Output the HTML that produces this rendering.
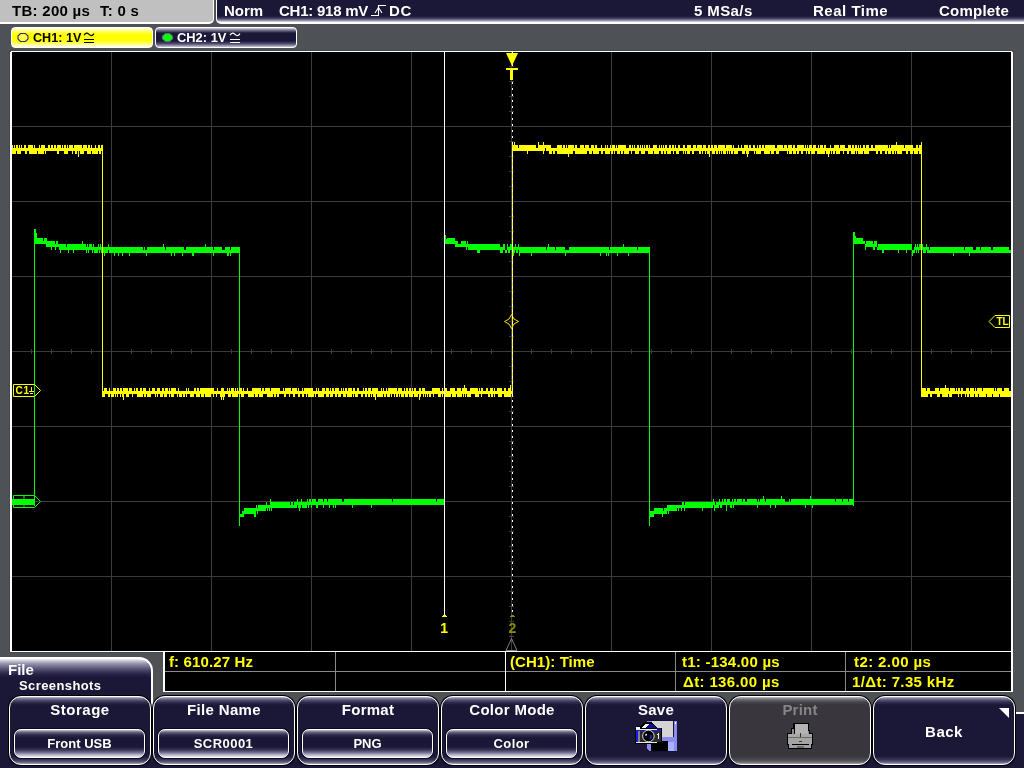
<!DOCTYPE html>
<html lang="en">
<head>
<meta charset="utf-8">
<title>Oscilloscope screenshot</title>
<style>
html,body{margin:0;padding:0}
body{width:1024px;height:768px;overflow:hidden;background:#4e5156;position:relative;
font-family:"Liberation Sans",Arial,sans-serif;font-weight:bold;font-size:15px;line-height:1;color:#fff}
div,span{box-sizing:border-box}
.abs{position:absolute}
.st{font-family:"Liberation Sans",Arial,sans-serif;font-weight:bold}
.t{position:absolute;white-space:pre;line-height:15px;height:15px;will-change:transform}
#tbl{position:absolute;left:0;top:0;width:214px;height:24px;background:#c0c0c0;border-right:1px solid #fff;border-bottom:2px solid #fff;border-bottom-right-radius:5px;color:#000}
#tbr{position:absolute;left:216px;top:0;width:808px;height:24px;border-left:1px solid #fff;border-bottom:2px solid #fff;border-bottom-left-radius:5px;
background:linear-gradient(to bottom,#1b1736 0,#1b1736 16px,#37335a 18px,#7e7b98 20px,#c8c7d4 21.5px,#e8e8ee 22px)}
.tab{position:absolute;top:27px;height:21px;border:1px solid #fff;border-radius:4px;font-size:12.5px}
#tab1{left:11px;width:142px;color:#000;background:linear-gradient(to bottom,#ffffe8 0,#ffffa0 2px,#ffff48 4px,#ffff00 7px,#ffff00 12px,#ffff50 15px,#ffffa8 17px,#fffff0 19px)}
#tab2{left:155px;width:142px;color:#fff;background:linear-gradient(to bottom,#d8d7e2 0,#7d7a98 2px,#1b1736 5px,#1b1736 13px,#55527a 16px,#c9c8d6 19px)}
#scope{position:absolute;left:0;top:0;width:1024px;height:768px;will-change:transform}
#meas{position:absolute;left:163px;top:651px;width:850px;height:41px;background:#000;border:1px solid #fff;border-left-width:2px;border-right-width:2px;color:#ffff00}
#filetab{position:absolute;left:-2px;top:657px;width:155px;height:70px;border:1px solid #fff;border-top-width:2px;border-right-width:2px;border-bottom:0;border-top-right-radius:14px;
background:linear-gradient(to bottom,#f4f4f8 0,#c4c3d2 2px,#918fa8 5px,#605d7e 9px,#37335a 13px,#231f42 16px,#1b1736 19px)}
#bar{position:absolute;left:0;top:712px;width:1024px;height:56px;background:#1b1736;border-top:2px solid #fff}
.btn{position:absolute;top:696px;width:142px;height:69px;border:1px solid #fff;border-radius:12px;text-align:center;box-shadow:0 0 0 1px #000;
background:linear-gradient(to bottom,#bdbccc 0,#6d6a8a 2px,#34304f 5px,#1b1736 8px,#1b1736 59px,#3b3758 63px,#7a7794 66px,#b5b4c6 67px)}
.btn.dis{color:#858585;background:linear-gradient(to bottom,#c0c0c4 0,#77767c 2px,#47454b 5px,#39373d 8px,#39373d 59px,#4d4b52 63px,#7c7b82 66px,#b0b0b6 67px)}
.bl{position:absolute;left:0;right:0;top:5px;height:15px;line-height:15px;font-size:15px;letter-spacing:0;will-change:transform}
.val{position:absolute;left:4px;right:5px;top:32px;height:29px;border:1px solid #fff;border-radius:7px;font-size:13px;letter-spacing:0;box-shadow:0 0 0 1px #0a0820;
background:linear-gradient(to bottom,#c9c8d6 0,#6d6a8a 2px,#2c2848 5px,#1b1736 8px,#1b1736 17px,#3b3758 20px,#7d7a98 23px,#bcbbcc 25px,#e6e6ee 27px)}
.val span{position:absolute;left:0;right:0;top:6px;line-height:15px;will-change:transform}
</style>
</head>
<body>
<!-- top status bar -->
<div id="tbl"></div>
<div id="tbr"></div>
<span class="t" id="x-tb" style="left:11.84px;top:3px;color:#000;letter-spacing:0.28px">TB: 200 µs</span>
<span class="t" id="x-tt" style="left:99.84px;top:3px;color:#000;letter-spacing:0.28px">T: 0 s</span>
<span class="t" id="x-norm" style="left:223.84px;top:3px;color:#fff;letter-spacing:0px">Norm</span>
<span class="t" id="x-ch1" style="left:278.84px;top:3px;color:#fff;letter-spacing:-0.238px">CH1: 918 mV</span>
<span class="t" id="x-dc" style="left:388.84px;top:3px;color:#fff;letter-spacing:0.7px">DC</span>
<span class="t" id="x-msa" style="left:693.52px;top:3px;color:#fff;letter-spacing:0.397px">5 MSa/s</span>
<span class="t" id="x-real" style="left:813px;top:3px;color:#fff;letter-spacing:0.508px">Real Time</span>
<span class="t" id="x-comp" style="left:938.52px;top:3px;color:#fff;letter-spacing:0.22px">Complete</span>
<svg class="abs" style="left:370px;top:0" width="20" height="20" viewBox="0 0 20 20"><path d="M1 15.5H8.500V5.500H16" fill="none" stroke="#fff" stroke-width="1.100"/><path d="M5 13L8.500 7.500L12 13" fill="none" stroke="#fff" stroke-width="1.100"/></svg>

<!-- channel tabs -->
<div class="tab" id="tab1"></div>
<div class="tab" id="tab2"></div>
<svg class="abs" style="left:17px;top:32px" width="12" height="11" viewBox="0 0 12 11"><path d="M3.5 1.5h5l2.5 2.5v3l-2.5 2.5h-5l-2.5-2.5v-3z" fill="#ffff50" stroke="#34325a" stroke-width="1.15"/></svg>
<span class="t" style="left:33px;top:31px;font-size:12.6px;color:#000">CH1: 1V</span>
<svg class="abs" style="left:83px;top:32px" width="12" height="12" viewBox="0 0 12 12"><path d="M1 3.2C3 0.2 4.6 1 6 2.4S9 4.6 11 1.6" fill="none" stroke="#000" stroke-width="1.1"/><path d="M1 7.5h10M1 10.5h10" stroke="#000" stroke-width="1.1"/></svg>
<svg class="abs" style="left:161px;top:32px" width="13" height="11" viewBox="0 0 13 11"><path d="M4.300 1.800h4.400l2.600 2.400v2.600l-2.600 2.400h-4.400l-2.600-2.400v-2.600z" fill="#00ff00" stroke="#5e9070" stroke-width="1.100" stroke-linejoin="round"/></svg>
<span class="t" style="left:177px;top:30.4px;font-size:12.9px">CH2: 1V</span>
<svg class="abs" style="left:229px;top:32px" width="12" height="12" viewBox="0 0 12 12"><path d="M1 3.2C3 0.2 4.6 1 6 2.4S9 4.6 11 1.6" fill="none" stroke="#fff" stroke-width="1.2"/><path d="M1 7.5h10M1 10.5h10" stroke="#fff" stroke-width="1.2"/></svg>

<!-- scope display -->
<svg id="scope" width="1024" height="768" viewBox="0 0 1024 768" shape-rendering="crispEdges">
<rect x="9" y="50" width="1005" height="603" fill="#44474c"/>
<rect x="10" y="51" width="1003" height="601" fill="#fff"/>
<rect x="10" y="51" width="1" height="1" fill="#4e5156"/><rect x="1012" y="51" width="1" height="1" fill="#4e5156"/>
<rect x="12" y="52" width="999" height="599" fill="#000"/>
<path d="M111 52h1v599h-1zM211 52h1v599h-1zM311 52h1v599h-1zM411 52h1v599h-1zM511 52h1v599h-1zM611 52h1v599h-1zM711 52h1v599h-1zM811 52h1v599h-1zM911 52h1v599h-1zM12 126h999v1h-999zM12 201h999v1h-999zM12 276h999v1h-999zM12 351h999v1h-999zM12 426h999v1h-999zM12 501h999v1h-999zM12 576h999v1h-999zM31 349h1v5h-1zM51 349h1v5h-1zM71 349h1v5h-1zM91 349h1v5h-1zM131 349h1v5h-1zM151 349h1v5h-1zM171 349h1v5h-1zM191 349h1v5h-1zM231 349h1v5h-1zM251 349h1v5h-1zM271 349h1v5h-1zM291 349h1v5h-1zM331 349h1v5h-1zM351 349h1v5h-1zM371 349h1v5h-1zM391 349h1v5h-1zM431 349h1v5h-1zM451 349h1v5h-1zM471 349h1v5h-1zM491 349h1v5h-1zM531 349h1v5h-1zM551 349h1v5h-1zM571 349h1v5h-1zM591 349h1v5h-1zM631 349h1v5h-1zM651 349h1v5h-1zM671 349h1v5h-1zM691 349h1v5h-1zM731 349h1v5h-1zM751 349h1v5h-1zM771 349h1v5h-1zM791 349h1v5h-1zM831 349h1v5h-1zM851 349h1v5h-1zM871 349h1v5h-1zM891 349h1v5h-1zM931 349h1v5h-1zM951 349h1v5h-1zM971 349h1v5h-1zM991 349h1v5h-1zM509 66h5v1h-5zM509 81h5v1h-5zM509 96h5v1h-5zM509 111h5v1h-5zM509 141h5v1h-5zM509 156h5v1h-5zM509 171h5v1h-5zM509 186h5v1h-5zM509 216h5v1h-5zM509 231h5v1h-5zM509 246h5v1h-5zM509 261h5v1h-5zM509 291h5v1h-5zM509 306h5v1h-5zM509 321h5v1h-5zM509 336h5v1h-5zM509 366h5v1h-5zM509 381h5v1h-5zM509 396h5v1h-5zM509 411h5v1h-5zM509 441h5v1h-5zM509 456h5v1h-5zM509 471h5v1h-5zM509 486h5v1h-5zM509 516h5v1h-5zM509 531h5v1h-5zM509 546h5v1h-5zM509 561h5v1h-5zM509 591h5v1h-5zM509 606h5v1h-5zM509 621h5v1h-5zM509 636h5v1h-5z" fill="#3c3c3c"/>
<path d="M41 501h970v1h-970z" fill="#3c3c3c"/>
<!-- traces -->
<path d="M12 499h22v6h-22zM34 229h1v277h-1zM35 229h1v15h-1zM36 233h1v11h-1zM37 238h6v6h-6zM43 241h1v3h-1zM44 238h2v6h-2zM46 238h1v9h-1zM47 241h4v6h-4zM51 241h1v9h-1zM52 241h3v6h-3zM55 244h1v6h-1zM56 241h2v6h-2zM58 244h1v3h-1zM59 244h1v6h-1zM60 244h1v9h-1zM61 244h5v6h-5zM66 247h1v3h-1zM67 244h1v6h-1zM68 244h1v9h-1zM69 244h4v6h-4zM73 244h1v9h-1zM74 244h8v6h-8zM82 241h1v9h-1zM83 244h3v6h-3zM86 247h1v6h-1zM87 244h1v6h-1zM88 247h1v6h-1zM89 244h3v6h-3zM92 247h1v6h-1zM93 244h1v6h-1zM94 247h4v6h-4zM98 244h1v6h-1zM99 247h1v6h-1zM100 244h1v6h-1zM101 247h3v6h-3zM104 247h1v9h-1zM105 247h3v6h-3zM108 244h1v6h-1zM109 247h5v6h-5zM114 247h1v9h-1zM115 247h3v6h-3zM118 247h1v9h-1zM119 247h3v6h-3zM122 247h1v9h-1zM123 247h6v6h-6zM129 247h1v9h-1zM130 247h13v6h-13zM143 250h1v3h-1zM144 247h1v6h-1zM145 250h1v3h-1zM146 250h1v6h-1zM147 247h16v6h-16zM163 244h1v9h-1zM164 247h1v6h-1zM165 250h1v3h-1zM166 247h5v6h-5zM171 247h1v9h-1zM172 247h2v6h-2zM174 247h1v9h-1zM175 247h7v6h-7zM182 247h1v9h-1zM183 247h1v6h-1zM184 250h2v3h-2zM186 247h6v6h-6zM192 247h2v9h-2zM194 247h11v6h-11zM205 244h1v9h-1zM206 247h7v6h-7zM213 250h1v6h-1zM214 247h8v6h-8zM222 250h3v3h-3zM225 247h2v6h-2zM227 247h2v9h-2zM229 247h1v6h-1zM230 250h1v6h-1zM231 247h8v6h-8zM239 247h1v279h-1zM240 514h2v3h-2zM242 511h2v6h-2zM244 508h10v6h-10zM254 508h2v9h-2zM256 505h1v6h-1zM257 508h1v6h-1zM258 505h8v6h-8zM266 502h1v6h-1zM267 505h1v6h-1zM268 505h1v3h-1zM269 505h1v6h-1zM270 499h1v9h-1zM271 502h1v9h-1zM272 502h18v6h-18zM290 505h1v3h-1zM291 502h2v6h-2zM293 505h1v3h-1zM294 502h3v6h-3zM297 499h1v6h-1zM298 502h1v6h-1zM299 502h1v9h-1zM300 502h1v6h-1zM301 499h1v6h-1zM302 502h5v6h-5zM307 499h1v6h-1zM308 502h1v6h-1zM309 499h2v6h-2zM311 502h1v6h-1zM312 499h4v6h-4zM316 502h2v6h-2zM318 499h5v6h-5zM323 502h1v6h-1zM324 499h3v6h-3zM327 502h1v3h-1zM328 499h1v6h-1zM329 499h1v9h-1zM330 499h3v6h-3zM333 499h1v9h-1zM334 499h1v6h-1zM335 499h1v9h-1zM336 499h6v6h-6zM342 502h2v3h-2zM344 499h8v6h-8zM352 499h1v9h-1zM353 499h18v6h-18zM371 499h1v9h-1zM372 499h20v6h-20zM392 502h1v3h-1zM393 499h43v6h-43zM436 502h1v3h-1zM437 499h7v6h-7zM444 235h1v271h-1zM445 235h1v9h-1zM446 239h1v5h-1zM447 238h8v6h-8zM455 241h3v6h-3zM458 244h3v3h-3zM461 241h5v6h-5zM466 244h1v6h-1zM467 241h1v6h-1zM468 244h9v6h-9zM477 244h3v9h-3zM480 244h20v6h-20zM500 247h3v6h-3zM503 244h2v6h-2zM505 250h2v3h-2zM507 244h1v6h-1zM508 247h2v6h-2zM510 244h2v6h-2zM512 247h1v6h-1zM513 247h1v9h-1zM514 247h1v6h-1zM515 244h1v6h-1zM516 247h2v6h-2zM518 244h1v6h-1zM519 247h1v9h-1zM520 247h11v6h-11zM531 247h1v9h-1zM532 247h14v6h-14zM546 250h1v3h-1zM547 247h1v6h-1zM548 244h1v9h-1zM549 247h6v6h-6zM555 250h1v3h-1zM556 247h9v6h-9zM565 250h1v6h-1zM566 250h3v3h-3zM569 247h31v6h-31zM600 247h1v9h-1zM601 247h5v6h-5zM606 247h1v9h-1zM607 247h1v6h-1zM608 247h1v9h-1zM609 250h1v3h-1zM610 247h7v6h-7zM617 247h1v9h-1zM618 247h5v6h-5zM623 244h1v9h-1zM624 247h4v6h-4zM628 247h1v9h-1zM629 247h8v6h-8zM637 250h1v3h-1zM638 247h11v6h-11zM649 247h1v279h-1zM650 511h4v6h-4zM654 508h8v6h-8zM662 508h1v9h-1zM663 511h1v3h-1zM664 508h3v6h-3zM667 505h1v6h-1zM668 505h1v9h-1zM669 505h8v6h-8zM677 505h1v3h-1zM678 505h1v6h-1zM679 505h2v3h-2zM681 505h1v6h-1zM682 502h2v6h-2zM684 505h1v6h-1zM685 502h17v6h-17zM702 502h1v9h-1zM703 502h10v6h-10zM713 499h1v6h-1zM714 502h1v9h-1zM715 505h1v3h-1zM716 502h3v6h-3zM719 499h1v6h-1zM720 502h2v6h-2zM722 499h1v6h-1zM723 502h1v3h-1zM724 499h2v6h-2zM726 502h1v9h-1zM727 499h3v6h-3zM730 502h2v6h-2zM732 499h1v6h-1zM733 502h1v6h-1zM734 499h2v6h-2zM736 502h1v3h-1zM737 499h5v6h-5zM742 502h1v3h-1zM743 499h2v6h-2zM745 502h2v3h-2zM747 499h10v6h-10zM757 502h1v6h-1zM758 499h1v6h-1zM759 502h1v3h-1zM760 499h3v6h-3zM763 496h1v9h-1zM764 499h1v6h-1zM765 502h1v3h-1zM766 499h4v6h-4zM770 499h1v9h-1zM771 499h4v6h-4zM775 499h1v9h-1zM776 499h5v6h-5zM781 496h1v9h-1zM782 499h3v6h-3zM785 502h4v3h-4zM789 499h1v6h-1zM790 502h1v3h-1zM791 499h14v6h-14zM805 499h1v9h-1zM806 499h4v6h-4zM810 496h1v9h-1zM811 499h1v6h-1zM812 499h1v9h-1zM813 499h22v6h-22zM835 502h1v3h-1zM836 499h6v6h-6zM842 502h1v3h-1zM843 499h5v6h-5zM848 502h1v3h-1zM849 499h4v6h-4zM853 232h1v274h-1zM854 232h1v12h-1zM855 236h1v8h-1zM856 238h7v6h-7zM863 241h2v3h-2zM865 244h1v6h-1zM866 241h7v6h-7zM873 244h1v6h-1zM874 241h1v9h-1zM875 241h2v6h-2zM877 247h1v3h-1zM878 244h4v6h-4zM882 244h2v9h-2zM884 244h14v6h-14zM898 244h1v9h-1zM899 244h7v6h-7zM906 244h1v9h-1zM907 244h5v6h-5zM912 250h1v6h-1zM913 250h1v3h-1zM914 247h1v6h-1zM915 244h1v6h-1zM916 247h1v6h-1zM917 244h1v6h-1zM918 247h1v6h-1zM919 244h2v6h-2zM921 247h1v6h-1zM922 244h1v6h-1zM923 247h3v6h-3zM926 244h1v6h-1zM927 247h2v6h-2zM929 250h1v3h-1zM930 247h23v6h-23zM953 247h1v9h-1zM954 247h10v6h-10zM964 250h1v3h-1zM965 247h4v6h-4zM969 247h1v9h-1zM970 247h3v6h-3zM973 250h3v3h-3zM976 247h4v6h-4zM980 250h1v3h-1zM981 247h10v6h-10zM991 250h2v3h-2zM993 247h16v6h-16zM1009 250h2v3h-2z" fill="#00ff00"/>
<path d="M12 145h1v9h-1zM13 148h1v6h-1zM14 145h1v9h-1zM15 148h1v6h-1zM16 145h1v6h-1zM17 145h1v9h-1zM18 148h1v6h-1zM19 145h1v9h-1zM20 148h1v6h-1zM21 145h1v6h-1zM22 148h2v3h-2zM24 145h1v6h-1zM25 145h1v9h-1zM26 148h1v6h-1zM27 148h1v3h-1zM28 145h1v6h-1zM29 145h4v9h-4zM33 148h1v6h-1zM34 145h1v9h-1zM35 148h2v6h-2zM37 148h1v3h-1zM38 148h1v6h-1zM39 145h1v9h-1zM40 148h1v6h-1zM41 145h3v9h-3zM44 145h1v6h-1zM45 148h1v6h-1zM46 148h2v3h-2zM48 145h2v6h-2zM50 148h1v3h-1zM51 145h2v6h-2zM53 148h1v3h-1zM54 145h2v6h-2zM56 148h1v3h-1zM57 145h2v9h-2zM59 145h2v6h-2zM61 148h1v3h-1zM62 145h1v6h-1zM63 148h1v3h-1zM64 145h2v9h-2zM66 148h1v6h-1zM67 145h1v9h-1zM68 148h1v3h-1zM69 145h3v6h-3zM72 145h1v9h-1zM73 148h1v3h-1zM74 145h1v6h-1zM75 145h2v9h-2zM77 145h1v6h-1zM78 145h1v12h-1zM79 145h1v6h-1zM80 145h2v9h-2zM82 148h1v6h-1zM83 145h1v9h-1zM84 145h3v6h-3zM87 148h1v6h-1zM88 145h2v9h-2zM90 148h1v6h-1zM91 145h1v6h-1zM92 148h3v6h-3zM95 145h1v9h-1zM96 148h2v6h-2zM98 145h1v6h-1zM99 145h1v9h-1zM100 148h1v6h-1zM101 145h1v6h-1zM102 145h1v252h-1zM103 391h1v6h-1zM104 388h1v9h-1zM105 388h2v6h-2zM107 391h1v3h-1zM108 391h1v6h-1zM109 388h1v9h-1zM110 391h1v3h-1zM111 391h2v6h-2zM113 388h1v9h-1zM114 388h1v6h-1zM115 388h1v9h-1zM116 391h1v3h-1zM117 388h1v9h-1zM118 388h1v6h-1zM119 391h1v3h-1zM120 388h1v9h-1zM121 388h1v6h-1zM122 391h1v6h-1zM123 388h1v12h-1zM124 388h2v6h-2zM126 388h2v9h-2zM128 391h1v6h-1zM129 388h3v6h-3zM132 391h1v6h-1zM133 391h1v3h-1zM134 388h1v6h-1zM135 391h1v3h-1zM136 388h1v6h-1zM137 388h1v9h-1zM138 391h2v6h-2zM140 388h2v9h-2zM142 391h1v6h-1zM143 388h1v6h-1zM144 388h2v9h-2zM146 391h1v3h-1zM147 391h2v6h-2zM149 388h1v9h-1zM150 391h1v6h-1zM151 391h1v3h-1zM152 388h3v6h-3zM155 391h1v6h-1zM156 391h1v3h-1zM157 388h1v9h-1zM158 388h2v6h-2zM160 391h2v6h-2zM162 388h1v9h-1zM163 388h1v6h-1zM164 391h1v6h-1zM165 388h2v9h-2zM167 388h1v6h-1zM168 391h1v3h-1zM169 388h1v9h-1zM170 391h1v3h-1zM171 388h3v9h-3zM174 388h2v6h-2zM176 391h1v3h-1zM177 391h1v6h-1zM178 388h1v6h-1zM179 391h3v6h-3zM182 391h1v3h-1zM183 391h2v6h-2zM185 391h1v3h-1zM186 388h1v9h-1zM187 391h1v3h-1zM188 388h1v6h-1zM189 391h1v3h-1zM190 391h4v6h-4zM194 388h2v6h-2zM196 391h1v6h-1zM197 388h2v9h-2zM199 391h1v6h-1zM200 388h1v6h-1zM201 388h3v9h-3zM204 388h1v6h-1zM205 388h6v9h-6zM211 388h2v6h-2zM213 388h1v9h-1zM214 391h2v3h-2zM216 391h1v6h-1zM217 388h1v6h-1zM218 391h2v3h-2zM220 391h1v6h-1zM221 388h1v12h-1zM222 388h1v9h-1zM223 388h1v12h-1zM224 391h1v6h-1zM225 391h2v3h-2zM227 388h1v6h-1zM228 391h1v6h-1zM229 388h1v9h-1zM230 391h1v6h-1zM231 388h1v6h-1zM232 388h2v9h-2zM234 391h1v6h-1zM235 388h1v9h-1zM236 391h1v6h-1zM237 388h1v9h-1zM238 391h1v3h-1zM239 388h1v9h-1zM240 388h1v6h-1zM241 388h1v9h-1zM242 391h1v6h-1zM243 388h1v9h-1zM244 391h3v3h-3zM247 388h1v6h-1zM248 391h4v6h-4zM252 388h2v9h-2zM254 388h1v6h-1zM255 388h3v9h-3zM258 388h1v6h-1zM259 388h2v9h-2zM261 391h1v6h-1zM262 388h1v9h-1zM263 388h1v6h-1zM264 391h1v3h-1zM265 388h2v6h-2zM267 388h3v9h-3zM270 391h1v6h-1zM271 388h2v9h-2zM273 388h1v6h-1zM274 388h2v9h-2zM276 388h1v6h-1zM277 388h2v9h-2zM279 388h1v6h-1zM280 391h3v3h-3zM283 388h1v6h-1zM284 391h1v6h-1zM285 388h1v9h-1zM286 388h3v6h-3zM289 388h1v9h-1zM290 388h1v6h-1zM291 391h1v3h-1zM292 388h1v6h-1zM293 388h2v9h-2zM295 388h2v6h-2zM297 391h1v3h-1zM298 388h1v9h-1zM299 391h1v6h-1zM300 391h2v3h-2zM302 388h1v9h-1zM303 391h1v6h-1zM304 388h2v6h-2zM306 388h1v9h-1zM307 388h1v6h-1zM308 388h5v9h-5zM313 391h1v6h-1zM314 391h1v3h-1zM315 391h1v6h-1zM316 388h1v6h-1zM317 391h1v3h-1zM318 388h1v9h-1zM319 391h3v6h-3zM322 388h2v9h-2zM324 388h1v6h-1zM325 391h1v3h-1zM326 388h3v9h-3zM329 391h1v3h-1zM330 388h1v9h-1zM331 391h1v6h-1zM332 388h1v9h-1zM333 388h1v6h-1zM334 391h1v3h-1zM335 388h2v9h-2zM337 388h1v6h-1zM338 388h1v9h-1zM339 391h2v6h-2zM341 388h1v6h-1zM342 391h1v3h-1zM343 388h1v9h-1zM344 391h1v6h-1zM345 388h1v9h-1zM346 388h1v6h-1zM347 391h1v6h-1zM348 388h4v9h-4zM352 391h1v3h-1zM353 388h1v9h-1zM354 388h1v6h-1zM355 391h2v6h-2zM357 388h1v9h-1zM358 388h1v6h-1zM359 391h2v3h-2zM361 391h2v6h-2zM363 388h1v6h-1zM364 391h1v3h-1zM365 388h2v9h-2zM367 391h1v3h-1zM368 388h2v9h-2zM370 388h1v6h-1zM371 391h1v6h-1zM372 388h1v6h-1zM373 388h2v9h-2zM375 388h1v12h-1zM376 388h1v6h-1zM377 388h1v9h-1zM378 391h3v6h-3zM381 388h1v9h-1zM382 391h1v6h-1zM383 388h1v6h-1zM384 391h2v6h-2zM386 388h1v6h-1zM387 391h1v6h-1zM388 388h2v9h-2zM390 388h1v6h-1zM391 388h1v9h-1zM392 388h2v6h-2zM394 388h1v9h-1zM395 388h1v6h-1zM396 388h1v9h-1zM397 391h1v6h-1zM398 388h1v6h-1zM399 388h1v9h-1zM400 388h1v6h-1zM401 388h1v9h-1zM402 391h2v6h-2zM404 388h1v6h-1zM405 391h1v6h-1zM406 388h2v9h-2zM408 391h1v3h-1zM409 388h2v9h-2zM411 391h1v6h-1zM412 388h1v9h-1zM413 391h1v3h-1zM414 388h2v9h-2zM416 391h2v6h-2zM418 391h1v3h-1zM419 388h1v12h-1zM420 388h1v9h-1zM421 391h1v3h-1zM422 388h1v6h-1zM423 388h1v9h-1zM424 388h1v6h-1zM425 391h1v6h-1zM426 391h1v3h-1zM427 391h1v6h-1zM428 391h1v3h-1zM429 391h2v6h-2zM431 391h1v3h-1zM432 388h1v6h-1zM433 388h1v9h-1zM434 388h4v6h-4zM438 388h2v9h-2zM440 391h1v6h-1zM441 391h1v3h-1zM442 388h1v9h-1zM443 391h1v3h-1zM444 388h3v9h-3zM447 391h3v6h-3zM450 388h1v9h-1zM451 388h1v6h-1zM452 388h3v9h-3zM455 391h1v6h-1zM456 391h1v3h-1zM457 388h4v9h-4zM461 391h1v6h-1zM462 388h1v6h-1zM463 388h1v9h-1zM464 385h1v9h-1zM465 388h1v9h-1zM466 388h1v6h-1zM467 391h3v6h-3zM470 388h1v9h-1zM471 388h4v6h-4zM475 388h3v9h-3zM478 391h1v6h-1zM479 388h1v6h-1zM480 391h1v3h-1zM481 388h1v9h-1zM482 388h1v6h-1zM483 391h3v3h-3zM486 388h2v6h-2zM488 391h2v6h-2zM490 388h1v6h-1zM491 388h2v9h-2zM493 391h1v3h-1zM494 388h1v9h-1zM495 391h2v3h-2zM497 388h1v6h-1zM498 388h4v9h-4zM502 391h2v3h-2zM504 388h2v9h-2zM506 391h2v6h-2zM508 388h2v9h-2zM510 385h1v12h-1zM511 391h1v3h-1zM512 142h1v255h-1zM513 145h1v6h-1zM514 142h1v9h-1zM515 145h3v6h-3zM518 148h1v3h-1zM519 145h8v6h-8zM527 145h1v9h-1zM528 145h8v6h-8zM536 148h2v3h-2zM538 142h1v9h-1zM539 145h4v6h-4zM543 142h1v12h-1zM544 145h1v6h-1zM545 145h1v3h-1zM546 145h3v6h-3zM549 145h2v9h-2zM551 148h1v6h-1zM552 148h1v3h-1zM553 148h2v6h-2zM555 148h2v3h-2zM557 145h5v9h-5zM562 148h1v6h-1zM563 145h2v9h-2zM565 148h1v6h-1zM566 145h1v9h-1zM567 148h1v6h-1zM568 145h1v12h-1zM569 145h4v9h-4zM573 145h1v6h-1zM574 148h1v3h-1zM575 145h2v9h-2zM577 148h3v6h-3zM580 145h4v9h-4zM584 148h1v6h-1zM585 145h2v9h-2zM587 145h2v6h-2zM589 148h2v6h-2zM591 145h1v9h-1zM592 145h1v6h-1zM593 145h1v9h-1zM594 148h1v6h-1zM595 145h2v9h-2zM597 148h2v6h-2zM599 148h2v3h-2zM601 145h1v9h-1zM602 148h1v6h-1zM603 148h2v3h-2zM605 145h1v9h-1zM606 148h1v6h-1zM607 145h1v9h-1zM608 148h2v6h-2zM610 145h1v6h-1zM611 148h1v6h-1zM612 145h1v9h-1zM613 145h1v6h-1zM614 145h1v9h-1zM615 148h1v3h-1zM616 145h1v6h-1zM617 148h1v6h-1zM618 145h2v9h-2zM620 145h1v6h-1zM621 145h2v9h-2zM623 145h1v6h-1zM624 145h2v9h-2zM626 148h3v6h-3zM629 145h2v6h-2zM631 148h1v6h-1zM632 145h1v6h-1zM633 148h1v3h-1zM634 145h1v6h-1zM635 148h2v6h-2zM637 145h2v9h-2zM639 148h1v3h-1zM640 145h1v6h-1zM641 148h1v6h-1zM642 145h1v9h-1zM643 148h1v6h-1zM644 145h1v9h-1zM645 148h1v3h-1zM646 145h2v6h-2zM648 148h1v6h-1zM649 145h1v9h-1zM650 148h3v6h-3zM653 145h1v6h-1zM654 145h3v9h-3zM657 148h2v6h-2zM659 145h1v6h-1zM660 148h1v3h-1zM661 145h1v9h-1zM662 148h1v6h-1zM663 145h1v6h-1zM664 148h1v6h-1zM665 145h1v9h-1zM666 145h1v6h-1zM667 148h2v6h-2zM669 145h2v9h-2zM671 148h1v3h-1zM672 145h1v6h-1zM673 145h1v9h-1zM674 148h1v3h-1zM675 145h1v6h-1zM676 148h2v6h-2zM678 145h1v9h-1zM679 145h1v6h-1zM680 148h3v3h-3zM683 145h1v9h-1zM684 145h1v6h-1zM685 148h1v6h-1zM686 148h1v3h-1zM687 145h3v9h-3zM690 145h1v6h-1zM691 148h1v3h-1zM692 148h1v6h-1zM693 145h1v9h-1zM694 145h2v6h-2zM696 148h1v3h-1zM697 145h2v6h-2zM699 145h2v9h-2zM701 145h1v6h-1zM702 148h1v6h-1zM703 145h2v6h-2zM705 145h1v9h-1zM706 148h1v3h-1zM707 148h1v6h-1zM708 145h1v9h-1zM709 145h1v12h-1zM710 148h1v3h-1zM711 145h1v6h-1zM712 145h1v9h-1zM713 148h1v6h-1zM714 145h1v9h-1zM715 145h1v6h-1zM716 145h1v9h-1zM717 148h1v6h-1zM718 145h1v6h-1zM719 145h1v9h-1zM720 145h1v6h-1zM721 145h1v9h-1zM722 145h1v6h-1zM723 145h2v9h-2zM725 148h1v6h-1zM726 145h1v6h-1zM727 145h1v9h-1zM728 145h1v6h-1zM729 145h1v9h-1zM730 145h1v6h-1zM731 145h1v9h-1zM732 148h1v6h-1zM733 145h1v6h-1zM734 148h4v6h-4zM738 145h1v6h-1zM739 148h2v3h-2zM741 145h1v6h-1zM742 148h2v6h-2zM744 145h1v9h-1zM745 145h1v6h-1zM746 145h1v9h-1zM747 145h1v12h-1zM748 148h1v6h-1zM749 145h2v6h-2zM751 148h2v3h-2zM753 145h1v6h-1zM754 145h1v9h-1zM755 148h1v3h-1zM756 148h1v6h-1zM757 145h1v9h-1zM758 148h1v6h-1zM759 145h2v9h-2zM761 148h1v3h-1zM762 145h2v6h-2zM764 148h1v6h-1zM765 145h5v9h-5zM770 145h1v6h-1zM771 145h3v9h-3zM774 145h1v6h-1zM775 148h1v3h-1zM776 148h1v6h-1zM777 145h2v9h-2zM779 145h4v6h-4zM783 148h1v3h-1zM784 145h3v6h-3zM787 148h1v6h-1zM788 145h1v6h-1zM789 145h3v9h-3zM792 148h1v3h-1zM793 145h2v9h-2zM795 148h1v6h-1zM796 148h1v3h-1zM797 145h2v9h-2zM799 145h2v6h-2zM801 145h2v9h-2zM803 145h1v6h-1zM804 148h1v3h-1zM805 145h1v6h-1zM806 148h1v6h-1zM807 145h1v6h-1zM808 148h1v6h-1zM809 145h1v9h-1zM810 145h1v6h-1zM811 145h1v9h-1zM812 148h1v6h-1zM813 145h2v9h-2zM815 145h1v6h-1zM816 148h1v3h-1zM817 148h1v6h-1zM818 145h1v9h-1zM819 148h1v6h-1zM820 145h3v9h-3zM823 148h1v6h-1zM824 145h1v9h-1zM825 145h1v6h-1zM826 148h2v6h-2zM828 148h1v9h-1zM829 148h1v6h-1zM830 145h1v6h-1zM831 148h1v6h-1zM832 148h1v3h-1zM833 148h1v6h-1zM834 145h1v9h-1zM835 145h1v6h-1zM836 145h3v9h-3zM839 148h1v6h-1zM840 145h3v6h-3zM843 145h1v9h-1zM844 145h1v6h-1zM845 148h2v3h-2zM847 148h1v6h-1zM848 145h1v9h-1zM849 145h2v6h-2zM851 148h1v6h-1zM852 145h2v9h-2zM854 148h1v6h-1zM855 145h1v6h-1zM856 145h1v9h-1zM857 148h1v3h-1zM858 145h1v9h-1zM859 148h1v6h-1zM860 145h1v9h-1zM861 148h2v6h-2zM863 145h1v6h-1zM864 145h1v9h-1zM865 148h1v6h-1zM866 145h3v9h-3zM869 148h2v3h-2zM871 145h2v6h-2zM873 148h2v3h-2zM875 145h1v6h-1zM876 145h2v9h-2zM878 145h2v6h-2zM880 145h2v9h-2zM882 145h3v6h-3zM885 145h2v9h-2zM887 145h1v6h-1zM888 148h1v6h-1zM889 145h1v9h-1zM890 148h1v6h-1zM891 145h1v6h-1zM892 145h2v9h-2zM894 145h1v6h-1zM895 145h1v9h-1zM896 142h1v9h-1zM897 145h5v9h-5zM902 145h2v6h-2zM904 148h1v3h-1zM905 145h1v6h-1zM906 145h2v9h-2zM908 145h2v6h-2zM910 145h3v9h-3zM913 148h1v3h-1zM914 148h2v6h-2zM916 145h2v9h-2zM918 148h1v3h-1zM919 145h2v9h-2zM921 142h1v255h-1zM922 388h4v9h-4zM926 391h1v6h-1zM927 388h1v9h-1zM928 388h2v6h-2zM930 391h2v6h-2zM932 391h3v3h-3zM935 388h2v6h-2zM937 388h2v9h-2zM939 391h1v6h-1zM940 388h2v6h-2zM942 388h3v9h-3zM945 385h1v12h-1zM946 388h2v9h-2zM948 388h1v6h-1zM949 391h1v6h-1zM950 388h2v9h-2zM952 388h3v6h-3zM955 391h1v3h-1zM956 388h1v6h-1zM957 391h1v3h-1zM958 388h1v9h-1zM959 388h1v6h-1zM960 391h1v3h-1zM961 388h1v9h-1zM962 388h1v6h-1zM963 391h2v3h-2zM965 391h1v6h-1zM966 388h1v6h-1zM967 388h2v9h-2zM969 391h1v3h-1zM970 388h4v9h-4zM974 391h1v3h-1zM975 388h1v9h-1zM976 391h1v6h-1zM977 388h1v9h-1zM978 388h1v6h-1zM979 388h3v9h-3zM982 391h1v6h-1zM983 388h3v9h-3zM986 388h1v6h-1zM987 388h5v9h-5zM992 388h1v6h-1zM993 388h1v9h-1zM994 391h1v6h-1zM995 388h1v9h-1zM996 391h1v6h-1zM997 388h2v9h-2zM999 388h1v6h-1zM1000 388h2v9h-2zM1002 391h2v6h-2zM1004 388h5v9h-5zM1009 391h2v6h-2z" fill="#ffff00"/>
<!-- channel markers -->
<g shape-rendering="geometricPrecision" fill="none" stroke-width="1">
<path d="M13.5 384.5h21l6 6-6 6h-21z" stroke="#ffff00"/>
<path d="M13.5 495.5h21l6 6-6 6h-21zM24 495.5v12" stroke="#00ff00"/>
<path d="M1009.5 315.5h-14.500l-6 6 6 6h14.500z" stroke="#ffff00"/>
<path d="M511.500 314.500l2.500 4.500 4.500 2.500-4.500 2.500-2.500 4.500-2.500-4.500-4.500-2.500 4.500-2.500z" stroke="#ffd800"/>
<path d="M511.500 638.500l5.500 12h-11z" stroke="#808080"/>
</g>
<path d="M31 387h1v4h-1zM29 391h5v1h-5zM30 393h3v1h-3z" fill="#ffff00"/>
<text x="15.500" y="394" class="st" font-size="10" letter-spacing="0.8" font-weight="bold" fill="#ffff00" shape-rendering="geometricPrecision">C1</text>
<text x="996.500" y="325" class="st" font-size="10" font-weight="bold" fill="#ffff00" shape-rendering="geometricPrecision">TL</text>
<!-- cursors -->
<rect x="444" y="52" width="1" height="563" fill="#fff"/>
<path d="M512 52h1v2h-1zM512 58h1v2h-1zM512 64h1v2h-1zM512 70h1v2h-1zM512 76h1v2h-1zM512 82h1v2h-1zM512 88h1v2h-1zM512 94h1v2h-1zM512 100h1v2h-1zM512 106h1v2h-1zM512 112h1v2h-1zM512 118h1v2h-1zM512 124h1v2h-1zM512 130h1v2h-1zM512 136h1v2h-1zM512 142h1v2h-1zM512 148h1v2h-1zM512 154h1v2h-1zM512 160h1v2h-1zM512 166h1v2h-1zM512 172h1v2h-1zM512 178h1v2h-1zM512 184h1v2h-1zM512 190h1v2h-1zM512 196h1v2h-1zM512 202h1v2h-1zM512 208h1v2h-1zM512 214h1v2h-1zM512 220h1v2h-1zM512 226h1v2h-1zM512 232h1v2h-1zM512 238h1v2h-1zM512 244h1v2h-1zM512 250h1v2h-1zM512 256h1v2h-1zM512 262h1v2h-1zM512 268h1v2h-1zM512 274h1v2h-1zM512 280h1v2h-1zM512 286h1v2h-1zM512 292h1v2h-1zM512 298h1v2h-1zM512 304h1v2h-1zM512 310h1v2h-1zM512 316h1v2h-1zM512 322h1v2h-1zM512 328h1v2h-1zM512 334h1v2h-1zM512 340h1v2h-1zM512 346h1v2h-1zM512 352h1v2h-1zM512 358h1v2h-1zM512 364h1v2h-1zM512 370h1v2h-1zM512 376h1v2h-1zM512 382h1v2h-1zM512 388h1v2h-1zM512 394h1v2h-1zM512 400h1v2h-1zM512 406h1v2h-1zM512 412h1v2h-1zM512 418h1v2h-1zM512 424h1v2h-1zM512 430h1v2h-1zM512 436h1v2h-1zM512 442h1v2h-1zM512 448h1v2h-1zM512 454h1v2h-1zM512 460h1v2h-1zM512 466h1v2h-1zM512 472h1v2h-1zM512 478h1v2h-1zM512 484h1v2h-1zM512 490h1v2h-1zM512 496h1v2h-1zM512 502h1v2h-1zM512 508h1v2h-1zM512 514h1v2h-1zM512 520h1v2h-1zM512 526h1v2h-1zM512 532h1v2h-1zM512 538h1v2h-1zM512 544h1v2h-1zM512 550h1v2h-1zM512 556h1v2h-1zM512 562h1v2h-1zM512 568h1v2h-1zM512 574h1v2h-1zM512 580h1v2h-1zM512 586h1v2h-1zM512 592h1v2h-1zM512 598h1v2h-1zM512 604h1v2h-1zM512 610h1v2h-1z" fill="#fff"/>
<path d="M442 617h5v-1h-1v-1h-3v1h-1z" fill="#ffff00"/>
<path d="M510 617h5v-1h-1v-1h-3v1h-1z" fill="#8a8a00"/>
<!-- trigger marker -->
<path d="M506 53h12l-6 13z" fill="#ffff00" shape-rendering="geometricPrecision"/>
<path d="M506 68h12v2h-12zM510 70h3v10h-3z" fill="#ffff00"/>
<text x="444.200" y="632.500" text-anchor="middle" class="st" font-size="14" font-weight="bold" fill="#ffff00" shape-rendering="geometricPrecision">1</text>
<text x="512.500" y="632.500" text-anchor="middle" class="st" font-size="14" font-weight="bold" fill="#8a8a00" shape-rendering="geometricPrecision">2</text>
</svg>

<!-- measurement table -->
<div id="meas">
<div class="abs" style="left:0;top:19px;width:846px;height:1px;background:#8a8a8a"></div>
<div class="abs" style="left:170px;top:0;width:1px;height:39px;background:#8a8a8a"></div>
<div class="abs" style="left:340px;top:0;width:1px;height:39px;background:#fff"></div>
<div class="abs" style="left:510px;top:0;width:1px;height:39px;background:#8a8a8a"></div>
<div class="abs" style="left:680px;top:0;width:1px;height:39px;background:#8a8a8a"></div>
</div>
<span class="t" id="x-f" style="left:168.84px;top:654px;color:#ffff00;letter-spacing:0.127px">f: 610.27 Hz</span>
<span class="t" id="x-cht" style="left:510.04px;top:654px;color:#ffff00;letter-spacing:0.07px">(CH1): Time</span>
<span class="t" id="x-t1" style="left:681.64px;top:654px;color:#ffff00;letter-spacing:0.237px">t1: -134.00 µs</span>
<span class="t" id="x-t2" style="left:853.64px;top:654px;color:#ffff00;letter-spacing:0.406px">t2: 2.00 µs</span>
<span class="t" id="x-dt" style="left:683.2px;top:674px;color:#ffff00;letter-spacing:0.362px">Δt: 136.00 µs</span>
<span class="t" id="x-idt" style="left:852.04px;top:674px;color:#ffff00;letter-spacing:0.366px">1/Δt: 7.35 kHz</span>

<!-- soft-key menu -->
<div id="bar"></div>
<div id="filetab"></div>
<span class="t" style="left:8px;top:662px;font-size:15px">File</span>
<span class="t" style="left:19px;top:678px;font-size:13px;letter-spacing:0.4px">Screenshots</span>
<div class="btn" style="left:9px"><div class="bl" style="letter-spacing:0.5px">Storage</div><div class="val"><span style="letter-spacing:0px">Front USB</span></div></div>
<div class="btn" style="left:153px"><div class="bl" style="letter-spacing:0.35px">File Name</div><div class="val"><span style="letter-spacing:0.45px">SCR0001</span></div></div>
<div class="btn" style="left:297px"><div class="bl" style="letter-spacing:0.25px">Format</div><div class="val"><span style="letter-spacing:0px">PNG</span></div></div>
<div class="btn" style="left:441px"><div class="bl" style="letter-spacing:0.3px">Color Mode</div><div class="val"><span style="letter-spacing:0.4px">Color</span></div></div>
<div class="btn" style="left:585px"><div class="bl" style="letter-spacing:0.3px">Save</div></div>
<div class="btn dis" style="left:729px"><div class="bl" style="letter-spacing:0.2px">Print</div></div>
<div class="btn" style="left:873px"><div class="bl" style="top:27px;letter-spacing:0.5px">Back</div>
<svg class="abs" style="left:125px;top:11px" width="12" height="12" viewBox="0 0 12 12"><path d="M0 0h10v10z" fill="#fff"/></svg></div>

<!-- save icon -->
<svg class="abs" style="left:630px;top:716px" width="52" height="40" viewBox="630 716 52 40" shape-rendering="crispEdges">
<path d="M647 720h30v32h-27l-3-3z" fill="#8c8cf0"/>
<rect x="647" y="720" width="30" height="1" fill="#15123a"/>
<rect x="652" y="721" width="21" height="16" fill="#d4d4d4"/>
<rect x="673" y="721" width="1" height="16" fill="#15123a"/>
<rect x="651" y="741" width="17" height="11" fill="#000"/>
<rect x="668" y="742" width="6" height="9" fill="#a8b0ff"/>
<rect x="675" y="722" width="1" height="2" fill="#fff"/>
<rect x="650" y="751" width="27" height="1" fill="#15123a"/>
<!-- camera -->
<path d="M635 729l2-3h3l4-4h8l5 6h5v16h-27z" fill="#000"/>
<path d="M641 728l4-4h4l-3 4z" fill="#f4f4f4"/>
<path d="M649 724h3l4 4h-10z" fill="#10108c"/>
<rect x="636" y="727" width="4" height="2" fill="#f8f8f8"/>
<rect x="636" y="729" width="24" height="1" fill="#f0f0d8"/>
<rect x="657" y="728" width="4" height="2" fill="#10108c"/>
<rect x="636" y="730" width="25" height="1" fill="#1818e8"/>
<rect x="636" y="731" width="25" height="11" fill="#2c2c2c"/>
<rect x="636" y="731" width="1.500" height="11" fill="#1818e8"/>
<rect x="637.500" y="731" width="2.500" height="11" fill="#848484"/>
<rect x="636" y="742" width="21" height="1" fill="#e8e8e8"/>
<circle cx="648.400" cy="736" r="5.800" fill="#000" stroke="#d8d8d8" stroke-width="1" shape-rendering="geometricPrecision"/>
<path d="M645.500 735.500l1.200-1.500" stroke="#fff" stroke-width="1.300" shape-rendering="geometricPrecision"/>
<path d="M650.800 735v2.500l-1 1.200" stroke="#1838ff" stroke-width="1.300" fill="none" shape-rendering="geometricPrecision"/>
<path d="M658 733h1v6h-1zM657 734h1v1h-1z" fill="#e8e8e8"/>
</svg>

<!-- print icon -->
<svg class="abs" style="left:784px;top:720px" width="32" height="32" viewBox="784 720 32 32" shape-rendering="crispEdges">
<path d="M793 723h16v7h1v3h3v12h-1v4h-24v-4h-1v-12h4v-5h2z" fill="#000"/>
<rect x="794" y="724" width="14" height="10" fill="#b4b4b4"/><rect x="794" y="724" width="1" height="10" fill="#000"/>
<rect x="792" y="729" width="2" height="5" fill="#8c8c8c"/>
<rect x="808" y="731" width="1" height="3" fill="#8c8c8c"/>
<rect x="788" y="734" width="24" height="3" fill="#a8a8a8"/>
<rect x="788" y="737" width="24" height="1" fill="#6a6a6a"/>
<rect x="788" y="738" width="24" height="6" fill="#a4a4a4"/>
<rect x="800" y="733" width="1" height="4" fill="#303030"/>
<rect x="799" y="741" width="3" height="1" fill="#3c3c3c"/>
<rect x="789" y="744" width="22" height="4" fill="#a0a0a0"/>
<rect x="792" y="744" width="17" height="1" fill="#000"/>
<rect x="797" y="746" width="7" height="2" fill="#6e6e6e"/>
</svg>
</body>
</html>
